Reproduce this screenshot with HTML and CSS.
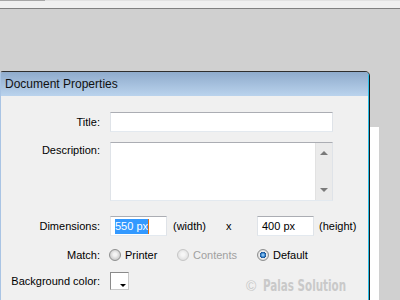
FILE: index.html
```html
<!DOCTYPE html>
<html lang="en">
<head>
    <meta charset="UTF-8">
    <meta name="viewport" content="width=device-width, initial-scale=1.0">
    <title>Document Properties</title>
    <link rel="stylesheet" href="styles.css">
</head>
<body>

    <div class="topstrip"><div class="tab"></div></div>

    <div class="desk">
        <div class="window">
            <div class="titlebar">Document Properties</div>

            <div class="content">
                <div class="row">
                    <span class="lbl">Title:</span>
                    <div class="field wide"></div>
                </div>

                <div class="row row-top">
                    <span class="lbl lbl-top">Description:</span>
                    <div class="field area">
                        <div class="scroll">
                            <span class="arr up"></span>
                            <span class="arr down"></span>
                        </div>
                    </div>
                </div>

                <div class="row row-dims">
                    <span class="lbl">Dimensions:</span>
                    <div class="line">
                        <div class="field small"><span class="sel">550 px</span><span class="caret"></span></div>
                        <span class="unit">(width)</span>
                        <span class="times">x</span>
                        <div class="field small">400 px</div>
                        <span class="unit-h">(height)</span>
                    </div>
                </div>

                <div class="row row-match">
                    <span class="lbl">Match:</span>
                    <div class="line">
                        <label class="opt opt-1"><span class="radio"></span>Printer</label>
                        <label class="opt opt-2 off"><span class="radio"></span>Contents</label>
                        <label class="opt"><span class="radio on"></span>Default</label>
                    </div>
                </div>

                <div class="row row-bg">
                    <span class="lbl">Background color:</span>
                    <div class="swatch"><span class="tri"></span></div>
                </div>

                <div class="mark"><span class="copy">©</span><span class="brand">Palas Solution</span></div>
            </div>
        </div>
        <div class="behind"></div>
    </div>

</body>
</html>
```

FILE: styles.css
```css
*, *::after, *::before{
    margin: 0;
    padding: 0;
    box-sizing: border-box;
}
:root{
    --desk: #d0d0d0;
    --face: #f0f0f0;
    --ink: #000;
}

body{
    width: 400px;
    height: 300px;
    overflow: hidden;
    background-color: var(--desk);
    font-family: "Liberation Sans", Arial, sans-serif;
    font-size: 11px;
    color: var(--ink);
}

/* strip at the very top */
.topstrip{
    height: 9px;
    background-color: #f0f0f0;
    border-top: 1px solid #e2e2e2;
    border-bottom: 1px solid #808080;
    position: relative;
}
.tab{
    position: absolute;
    top: -1px;
    left: 0;
    width: 45px;
    height: 1px;
    background-color: #a6a6a6;
}

.desk{
    display: flex;
    height: 291px;
    padding-top: 62px;
}

/* dialog */
.window{
    width: 370px;
    display: flex;
    flex-direction: column;
    border-top: 1px solid #2e2e2e;
    border-right: 1px solid #1c1c1c;
    border-left: 1px solid #a9c4e4;
    border-top-left-radius: 3px;
    border-top-right-radius: 5px;
    overflow: hidden;
}
.titlebar{
    height: 24px;
    flex-shrink: 0;
    padding-left: 4px;
    line-height: 25px;
    font-size: 12px;
    color: #111;
    background: linear-gradient(#8fabcc, #bad3ed);
    border-right: 1px solid #2bbfe8;
}
.content{
    flex: 1;
    position: relative;
    background-color: var(--face);
    border-right: 1px solid #2bbfe8;
    padding-top: 16px;
    display: flex;
    flex-direction: column;
    gap: 10px;
}
.behind{
    width: 9px;
    margin-top: 56px;
    background-color: #fff;
}

/* form rows */
.row{
    display: grid;
    grid-template-columns: 99px 1fr;
    column-gap: 10px;
    align-items: center;
    height: 20px;
}
.row-top{
    align-items: start;
    height: 59px;
}
.row-dims{ margin-top: 5px; }
.row-match{ margin-top: -1px; height: 19px; }
.row-bg{ margin-top: -2px; height: 18px; }

.lbl{
    text-align: right;
}
.lbl-top{
    padding-top: 2px;
}

.field{
    height: 20px;
    background-color: #fff;
    border: 1px solid #dfe3e8;
    border-top-color: #abadb3;
    border-bottom-color: #e3e9ef;
    padding: 0 4px;
    line-height: 18px;
    font-size: 11px;
}
.wide{ width: 223px; }
.area{
    width: 223px;
    height: 59px;
    display: flex;
    justify-content: flex-end;
    padding: 0;
}
.scroll{
    width: 17px;
    height: 100%;
    background-color: #ebebeb;
    border-left: 1px solid #e2e2e2;
    position: relative;
}
.arr{
    position: absolute;
    left: 4px;
    width: 0;
    height: 0;
    border-left: 4px solid transparent;
    border-right: 4px solid transparent;
}
.arr.up{
    top: 8px;
    border-bottom: 4px solid #7a7a7a;
}
.arr.down{
    bottom: 8px;
    border-top: 4px solid #7a7a7a;
}

.line{
    display: flex;
    align-items: center;
    white-space: nowrap;
}
.small{
    width: 57px;
    display: flex;
    align-items: center;
}
.sel{
    background-color: #3399ff;
    color: #fff;
    line-height: 15px;
}
.caret{
    width: 1px;
    height: 15px;
    background-color: #e07010;
}
.unit{
    width: 59px;
    padding-left: 6px;
}
.times{
    width: 31px;
}
.unit-h{
    padding-left: 5px;
}

/* radio options */
.opt{
    display: flex;
    align-items: center;
    gap: 4px;
}
.opt-1{
    width: 68px;
    margin-left: -1px;
}
.opt-2{
    width: 80px;
}
.off{
    color: #a0a0a0;
}
.radio{
    width: 12px;
    height: 12px;
    border-radius: 50%;
    border: 1px solid #8e8f8f;
    background: radial-gradient(circle at 50% 45%, #f4f4f4 20%, #c9c9c9 75%);
}
.off .radio{
    border-color: #c6c6c6;
    background: radial-gradient(circle at 50% 45%, #f6f6f6 20%, #e0e0e0 75%);
}
.radio.on{
    background: radial-gradient(circle, #b8e2ff 0, #2b7bc9 30%, #1d4f8a 42%, #f2f2f2 46%, #d0d0d0 80%);
}

/* colour picker */
.swatch{
    width: 19px;
    height: 18px;
    background-color: #fff;
    border: 1px solid #c9c9c9;
    border-top-color: #8a8a8a;
    border-left-color: #8a8a8a;
    position: relative;
}
.tri{
    position: absolute;
    right: 2px;
    bottom: 2px;
    border-left: 3px solid transparent;
    border-right: 3px solid transparent;
    border-top: 3px solid #000;
}

/* watermark over the dialog */
.mark{
    position: absolute;
    left: 245px;
    top: 181px;
    display: flex;
    align-items: center;
    gap: 7px;
    color: #c9c9c9;
    white-space: nowrap;
}
.copy{
    font-family: "Liberation Sans", Arial, sans-serif;
    font-size: 14px;
}
.brand{
    display: inline-block;
    font-family: "DejaVu Sans Condensed", "DejaVu Sans", sans-serif;
    font-weight: bold;
    font-size: 16px;
    line-height: 18px;
    transform: scaleX(0.72);
    transform-origin: left center;
}
```
